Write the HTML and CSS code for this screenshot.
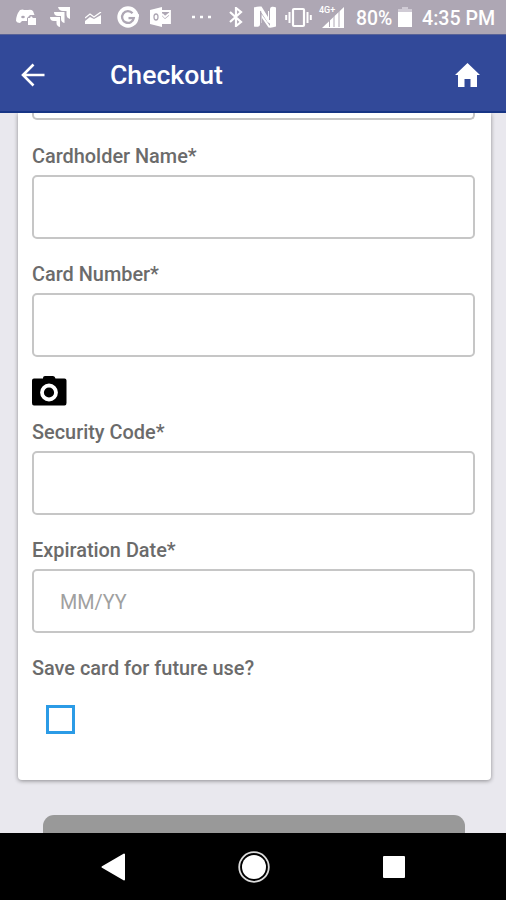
FILE: index.html
```html
<!DOCTYPE html>
<html lang="en">
<head>
<meta charset="utf-8">
<title>Checkout</title>
<link rel="stylesheet" href="styles.css">
</head>
<body>
<div class="screen">
  <div class="status">
    <svg class="s-game" width="20" height="20" viewBox="0 0 20 20"><path fill="#fff" d="M4 3Q7 2 8 3H12Q15 2 17 4L18.500 8H14L11 11V14H6L4 16Q1 16 0 14Q0 8 4 3Z"/><path fill="#fff" d="M12 11H14L15 9L17 11H20V18H12Z"/><ellipse cx="7" cy="10" rx="1.800" ry="1.300" fill="#aea7b4"/></svg>
    <svg class="s-jira" width="20" height="20" viewBox="0 0 20 20"><path fill="#fff" d="M8 0H20V12Q16.500 11 16.500 7.500V4H13Q9 4 8 0ZM4 5H14.500V16Q11 15 11 12V9H8Q4 9 4 5ZM0 10H10V20Q6.500 19 6.500 16V14H4Q0 14 0 10Z"/></svg>
    <svg class="s-chart" width="17" height="12" viewBox="0 0 17 12"><path fill="#fff" d="M0 12V9L5 5L9 7L16 3V12Z"/><path d="M0 6L5 2L9 5L16 0" fill="none" stroke="#fff" stroke-width="1.3"/></svg>
    <svg class="s-google" width="22" height="22" viewBox="0 0 22 22"><circle cx="11" cy="11" r="10.7" fill="#fff"/><path d="M15.500 7.200A5.900 5.900 0 1 0 16.800 12H11.500" fill="none" stroke="#aea7b4" stroke-width="2.300"/><path fill="#fff" d="M11 8.200H22V10.800H11Z"/></svg>
    <svg class="s-outlook" width="21" height="20" viewBox="0 0 21 20"><path fill="#fff" d="M0 3L12 0V20L0 17Z"/><path d="M12 4H20V16H12M12 7L15 10L20 6" fill="none" stroke="#fff" stroke-width="1.8"/><path fill="#fff" d="M12 9L15 12L20 8V16H12Z"/><ellipse cx="6" cy="10" rx="2" ry="3" fill="none" stroke="#aea7b4" stroke-width="1.3"/></svg>
    <svg class="s-dots" width="19" height="4" viewBox="0 0 19 4"><path d="M0 2h3M8 2h3M16 2h3" stroke="#fff" stroke-width="2.6"/></svg>
    <svg class="s-bt" width="14" height="20" viewBox="0 0 14 20"><path d="M1 5L12 15L7 19V1L12 5L1 15" fill="none" stroke="#fff" stroke-width="2.2"/></svg>
    <svg class="s-nfc" width="22" height="22" viewBox="0 0 22 22"><path fill="#fff" d="M0 1.500Q4 0 7.500 .5L14 11V5H16.500V18L13.500 16L6 4.500V18.500Q6 20.500 4 20.800Q1.500 21 0 20.500Z"/><path fill="#fff" d="M22 20.500Q18 22 14.500 21.500L8 12V17H7.500V8L16 20V3Q16 1 18 .8Q20.500 .6 22 1.500Z"/><path d="M6.700 5V18.500M15.500 3V14" fill="none" stroke="#aea7b4" stroke-width="1"/></svg>
    <svg class="s-vib" width="27" height="21" viewBox="0 0 27 21"><rect x="8" y="2" width="11" height="17" rx="1" fill="none" stroke="#fff" stroke-width="2.2"/><path d="M4.500 5V16M22.500 5V16M1.200 8V13M25.800 8V13" stroke="#fff" stroke-width="2"/></svg>
    <div class="signal">
      <span class="gen">4G+</span>
      <svg width="22" height="21" viewBox="0 0 22 21"><path fill="#fff" d="M0 21L22 0V21Z"/><path d="M7.500 12V20M12 9V20M17 4V20" stroke="#aea7b4"/></svg>
    </div>
    <span class="pct">80%</span>
    <svg class="s-bat" width="14" height="20" viewBox="0 0 14 20"><path fill="#d0cbd5" d="M4 0H10V2H14V6H0V2H4Z"/><path fill="#fff" d="M0 5H14V20H0Z"/></svg>
    <span class="time">4:35 PM</span>
  </div>
  <header class="bar">
    <svg class="back" width="24" height="24" viewBox="0 0 24 24"><path d="M23.500 12H2.500M12.500 1.500L2 12L12.500 22.500" fill="none" stroke="#fff" stroke-width="2.6"/></svg>
    <h1 class="title">Checkout</h1>
    <svg class="home" width="25" height="24" viewBox="0 0 25 24"><path fill="#fff" d="M12.500 0L25 12H22V24H15.500V16H9.500V24H3V12H0Z"/></svg>
  </header>
  <main class="content">
    <form class="card">
      <div class="input cut"></div>
      <label class="label" for="holder">Cardholder Name*</label>
      <input class="input" id="holder" type="text">
      <label class="label" for="number">Card Number*</label>
      <input class="input" id="number" type="text">
      <svg class="camera" width="35" height="30" viewBox="0 0 35 30"><path fill="#000" d="M11 2Q11 0 13 0H21Q23 0 23.500 2.500H32.500Q34.500 2.500 34.500 4.500V27Q34.500 29.500 32.500 29.500H2Q0 29.500 0 27V4.500Q0 2.500 2 2.500H11Z"/><circle cx="17" cy="16.500" r="7" fill="#000" stroke="#fff" stroke-width="3.800"/></svg>
      <label class="label tight" for="code">Security Code*</label>
      <input class="input" id="code" type="text">
      <label class="label" for="expiry">Expiration Date*</label>
      <input class="input" id="expiry" type="text" placeholder="MM/YY">
      <label class="label" for="save">Save card for future use?</label>
      <input class="check" id="save" type="checkbox">
    </form>
    <div class="submit"></div>
  </main>
  <nav class="nav">
    <svg width="25" height="28" viewBox="0 0 25 28"><path fill="#fff" stroke="#fff" stroke-width="2" stroke-linejoin="round" d="M1.500 14L23 1.500V26.500Z"/></svg>
    <svg class="circle" width="32" height="32" viewBox="0 0 32 32"><circle cx="16" cy="16" r="14.800" fill="none" stroke="#ddd" stroke-width="1.800"/><circle cx="16" cy="16" r="12" fill="#fff"/></svg>
    <svg width="22" height="22" viewBox="0 0 22 22"><rect width="22" height="22" rx="1" fill="#fff"/></svg>
  </nav>
</div>
</body>
</html>
```
FILE: styles.css
```css
* { box-sizing: border-box; }
body { margin: 0; font-family: Roboto, "Liberation Sans", sans-serif; }
svg { display: block; flex: none; }
.screen { width: 506px; height: 900px; display: flex; flex-direction: column; overflow: hidden; }

.status {
  height: 34px; flex: none; display: flex; align-items: center;
  padding-left: 16px; background: #aea7b4; color: #fff;
  font-size: 19px; font-weight: 500; white-space: nowrap;
}
.s-jira { margin-left: 14px; }
.s-chart { margin-left: 15px; margin-top: 2px; }
.s-google { margin-left: 15px; }
.s-outlook { margin-left: 11px; }
.s-dots { margin-left: 21px; }
.s-bt { margin-left: 18px; }
.s-nfc { margin-left: 11px; }
.s-vib { margin-left: 9px; }
.signal { position: relative; margin-left: 10px; }
.gen { position: absolute; left: -3px; top: -2px; font-size: 9px; line-height: 10px; font-weight: 500; }
.pct { width: 36px; margin-left: 12px; margin-top: 2px; font-size: 19.4px; }
.s-bat { margin-left: 6px; }
.time { margin-left: 10px; margin-top: 2px; font-size: 19.6px; }

.bar {
  height: 79px; flex: none; display: flex; align-items: center;
  padding: 4px 26px 0 21px; background: #324999;
  border-top: 1px solid #596397; border-bottom: 2px solid #173585;
}
.title { margin: 0 0 0 65px; color: #fff; font-size: 26.6px; line-height: 32px; font-weight: 500; }
.home { margin-left: auto; }

.content { flex: 1; min-height: 0; overflow: hidden; background: #e9e8ee; }
.card {
  width: 473px; height: 667px; margin-left: 17.5px; padding: 0 15px 0 14.5px;
  background: #fff; border-radius: 0 0 4px 4px;
  box-shadow: 0 1px 4px rgba(0, 0, 0, .4);
}
.input {
  display: block; width: 443px; height: 64px; margin: 7px 0 0; padding: 2px 26px 0;
  border: 2px solid #c6c6c6; border-radius: 5px; background: #fff;
  font: 400 19.8px Roboto, sans-serif; color: #555; outline: 0;
}
.input::placeholder { color: #a0a0a0; opacity: 1; }
.cut { height: 7px; margin: 0; border-top: 0; border-radius: 0 0 5px 5px; }
.label {
  display: block; height: 24px; margin-top: 23px;
  font-size: 19.9px; line-height: 26px; font-weight: 500; color: #6b6b6b;
}
.cut + .label { margin-top: 24px; }
.camera { margin-top: 19px; }
.label.tight { margin-top: 14px; }
.check {
  appearance: none; display: block; width: 29px; height: 29px;
  margin: 25px 0 0 14px; border: 3px solid #2b9be6; background: #fff;
}
.submit { width: 422px; height: 62px; margin: 35px 0 0 42.5px; border-radius: 11px; background: #999; }

.nav {
  height: 67px; flex: none; display: flex; align-items: center;
  justify-content: space-between; padding: 0 101px; background: #000;
}
.circle { margin-right: 2px; }
```
